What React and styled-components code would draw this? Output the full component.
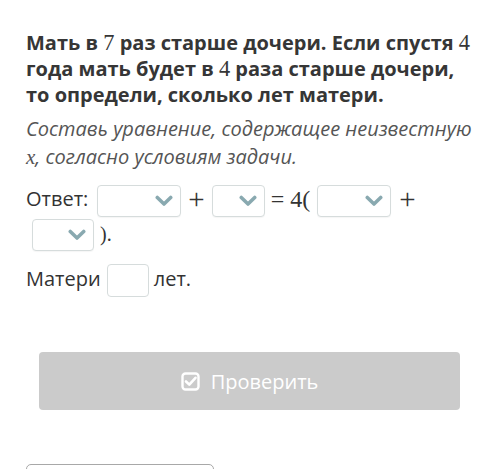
import React from "react";
import styled, { createGlobalStyle } from "styled-components";

const Global = createGlobalStyle`
  html, body { margin: 0; padding: 0; background: #fff; }
  body { font-family: "Open Sans", "Noto Sans", sans-serif; color: #333; }
`;

const Page = styled.div`
  width: 500px;
  height: 469px;
  overflow: hidden;
  box-sizing: border-box;
  padding: 30px 24px 0 26px;
`;

const Title = styled.h2`
  margin: 0;
  font-size: 20px;
  line-height: 26px;
  font-weight: 700;
  color: #363636;
`;

const Hint = styled.p`
  margin: 7px 0 0;
  font-size: 20px;
  line-height: 28px;
  font-style: italic;
  color: #555;
`;

const M = styled.span`
  font-family: "Liberation Serif", "DejaVu Serif", serif;
  font-weight: 400;
  line-height: 1;
  vertical-align: ${(p) => p.$drop ? `-${p.$drop}px` : "baseline"};
  font-style: ${(p) => (p.$italic ? "italic" : "normal")};
  font-size: ${(p) => (p.$size ? p.$size : "1.12em")};
  margin: 0 ${(p) => p.$gap || 0}px;
`;

const Answer = styled.div`
  margin-top: 11px;
  font-size: 20px;
  line-height: 34px;
  color: #333;
`;

const SelectBox = styled.span`
  display: inline-flex;
  align-items: center;
  justify-content: flex-end;
  box-sizing: border-box;
  width: ${(p) => p.$w}px;
  height: 32px;
  margin: 0 ${(p) => p.$mr ?? 6}px 0 ${(p) => p.$ml ?? 6}px;
  padding-right: 7px;
  vertical-align: middle;
  border: 1px solid #d6dcdc;
  border-radius: 4px;
  background: #fff;
  box-shadow: 0 1px 1px rgba(0, 0, 0, 0.04);
`;

const Chevron = () => (
  <svg width="18" height="12" viewBox="0 0 18 12">
    <path d="M2.3 2.5 L9 9 L15.7 2.5" fill="none" stroke="#89a9b0" strokeWidth="3.6" strokeLinecap="round" strokeLinejoin="round" />
  </svg>
);

const Row = styled.div`
  margin-top: 11px;
  font-size: 20px;
  line-height: 34px;
  color: #333;
`;

const InputBox = styled.span`
  display: inline-block;
  box-sizing: border-box;
  width: 42px;
  height: 33px;
  margin: 0 5px 0 6px;
  vertical-align: middle;
  border: 1px solid #d6dcdc;
  border-radius: 4px;
  background: #fff;
`;

const Button = styled.button`
  display: flex;
  align-items: center;
  justify-content: center;
  gap: 11px;
  width: 421px;
  height: 58px;
  margin: 55px 0 0 13px;
  border: none;
  border-radius: 4px;
  background: #cbcbcb;
  color: #fff;
  font-family: "Open Sans", "Noto Sans", sans-serif;
  font-size: 20px;
  cursor: default;
`;

const Secondary = styled.div`
  box-sizing: border-box;
  width: 188px;
  height: 40px;
  margin-top: 54px;
  border: 1.5px solid #a8a8a8;
  border-radius: 5px;
`;

const CheckIcon = () => (
  <svg width="19" height="19" viewBox="0 0 19 19">
    <rect x="1.5" y="1.5" width="16" height="16" rx="3" fill="none" stroke="#fff" strokeWidth="2.4" />
    <path d="M5 9.5 L8.3 12.6 L14.5 5.8" fill="none" stroke="#fff" strokeWidth="2.6" strokeLinecap="round" strokeLinejoin="round" />
  </svg>
);

export default function App() {
  return (
    <>
      <Global />
      <Page>
        <Title>
          Мать в <M>7</M> раз старше дочери. Если спустя <M>4</M> года мать будет в <M>4</M> раза
          старше дочери, то определи, сколько лет матери.
        </Title>
        <Hint>
          Составь уравнение, содержащее неизвестную <M $italic $size="1.05em">x</M>, согласно условиям задачи.
        </Hint>
        <Answer>
          Ответ:
          <SelectBox $w={84} $ml={9}><Chevron /></SelectBox>
          <M $gap={1} $size="1.45em" $drop={3}>+</M>
          <SelectBox $w={53}><Chevron /></SelectBox>
          <M $size="1.2em" $drop={1}>= 4(</M>
          <SelectBox $w={74} $ml={7}><Chevron /></SelectBox>
          <M $gap={2} $size="1.45em" $drop={3}>+</M>{" "}
          <SelectBox $w={62} $mr={6}><Chevron /></SelectBox>
          <M $size="1em">).</M>
        </Answer>
        <Row>
          Матери<InputBox />лет.
        </Row>
        <Button>
          <CheckIcon />
          Проверить
        </Button>
        <Secondary />
      </Page>
    </>
  );
}
